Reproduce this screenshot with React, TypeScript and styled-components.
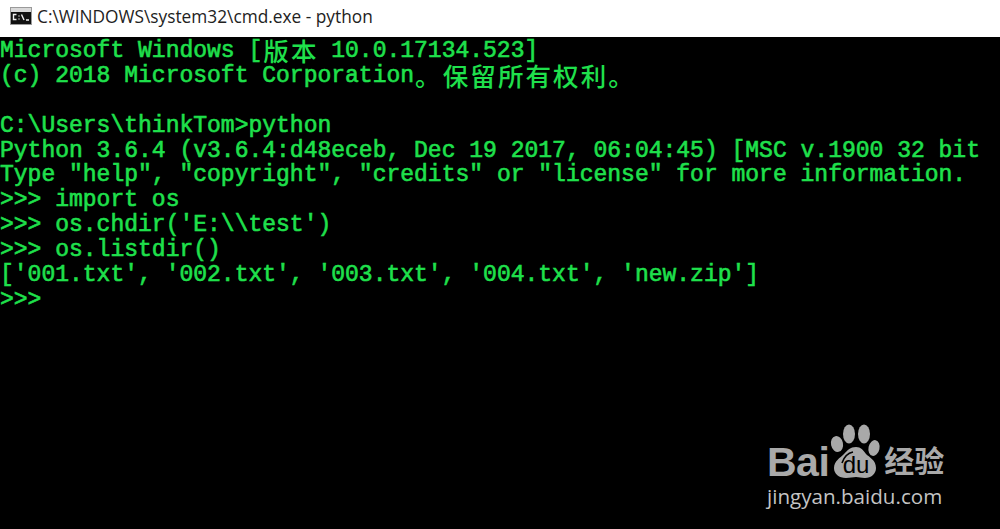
import React from 'react';
import styled, { createGlobalStyle } from 'styled-components';

const GlobalStyle = createGlobalStyle`
  html, body {
    margin: 0;
    padding: 0;
    background: #000;
  }
`;

const Page = styled.div`
  position: relative;
  width: 1000px;
  height: 529px;
  overflow: hidden;
  background: #000;
`;

const TitleBar = styled.div`
  display: flex;
  align-items: center;
  gap: 5px;
  height: 37px;
  padding: 0 0 5px 10px;
  box-sizing: border-box;
  background: #fff;
`;

const TitleText = styled.span`
  font-family: "Open Sans", "Noto Sans", sans-serif;
  font-size: 17.3px;
  color: #222;
  white-space: pre;
`;

const Terminal = styled.div`
  padding-top: 2px;
  font-family: "Liberation Mono", "Noto Sans CJK SC", monospace;
  font-size: 23px;
  font-weight: 400;
  -webkit-text-stroke: 0.6px #1fe04c;
  line-height: 24.9px;
  color: #1fe04c;
`;

const Line = styled.div`
  height: 24.9px;
  white-space: pre;
`;

const Wide = styled.span`
  display: inline-block;
  vertical-align: top;
  width: 27.6px;
  text-align: center;
  font-family: "Noto Sans CJK SC", sans-serif;
  font-size: 25.5px;
  font-weight: 500;
  -webkit-text-stroke: 0;
  line-height: 21px;
`;

const Watermark = styled.div`
  position: absolute;
  left: 767px;
  top: 421px;
  width: 180px;
  display: flex;
  flex-direction: column;
  color: #a9a9a9;
`;

const LogoRow = styled.div`
  display: flex;
  align-items: flex-end;
  height: 57px;
`;

const LogoWord = styled.span`
  font-family: "Liberation Sans", sans-serif;
  font-size: 41px;
  font-weight: 700;
  line-height: 31px;
  letter-spacing: -0.5px;
`;

const PawMark = styled.svg`
  flex: none;
  margin-left: 4px;
  overflow: visible;
`;

const LogoCjk = styled.span`
  margin-left: 5px;
  font-family: "Noto Sans CJK SC", sans-serif;
  font-size: 30px;
  font-weight: 700;
  line-height: 38px;
`;

const SiteUrl = styled.div`
  margin-top: 5px;
  font-family: "Open Sans", sans-serif;
  font-size: 20.6px;
  line-height: 26px;
  white-space: nowrap;
  color: #c4c4c4;
`;

const CmdIcon = () => (
  <svg width="22" height="18" viewBox="0 0 22 18">
    <rect x="0" y="0" width="22" height="18" fill="#9a9a9a" />
    <rect x="1" y="1" width="20" height="4" fill="#d8d8d8" />
    <rect x="1" y="5" width="20" height="12" fill="#111" />
    <path d="M6.5 7.5h-3v5h3M9 8.5v1M9 11.5v1M11.5 7.5l2.5 5.5M16 13h3" stroke="#efefef" strokeWidth="1.4" fill="none" />
  </svg>
);

const Paw = () => (
  <PawMark width="46" height="57" viewBox="0 0 46 57">
    <ellipse cx="4" cy="23" rx="6" ry="8" transform="rotate(-12 4 23)" fill="#a9a9a9" />
    <ellipse cx="16" cy="13" rx="6" ry="9.5" fill="#a9a9a9" />
    <ellipse cx="31" cy="13" rx="6" ry="9.5" fill="#a9a9a9" />
    <ellipse cx="41" cy="27" rx="5.5" ry="8" transform="rotate(12 41 27)" fill="#a9a9a9" />
    <path
      d="M23 26c5 0 7 3 10 7 3 3 10 6 10 14 0 6-5 10-11 10-4 0-6-1-9-1s-6 1-10 1c-7 0-12-4-12-10 0-7 6-10 10-14 4-4 6-7 12-7z"
      fill="#a9a9a9"
    />
    <path d="M9 42c2-6 6-10 11-11" stroke="#000" strokeWidth="1.6" fill="none" />
    <text
      x="23"
      y="52"
      textAnchor="middle"
      fontFamily="Liberation Sans, sans-serif"
      fontWeight="400"
      fontSize="24"
      fill="#000"
    >
      du
    </text>
  </PawMark>
);

const lines: React.ReactNode[] = [
  <>Microsoft Windows [<Wide>版</Wide><Wide>本</Wide> 10.0.17134.523]</>,
  <>(c) 2018 Microsoft Corporation<Wide>。</Wide><Wide>保</Wide><Wide>留</Wide><Wide>所</Wide><Wide>有</Wide><Wide>权</Wide><Wide>利</Wide><Wide>。</Wide></>,
  '',
  'C:\\Users\\thinkTom>python',
  'Python 3.6.4 (v3.6.4:d48eceb, Dec 19 2017, 06:04:45) [MSC v.1900 32 bit',
  'Type "help", "copyright", "credits" or "license" for more information.',
  '>>> import os',
  ">>> os.chdir('E:\\\\test')",
  '>>> os.listdir()',
  "['001.txt', '002.txt', '003.txt', '004.txt', 'new.zip']",
  '>>>',
];

const App = () => (
  <Page>
    <GlobalStyle />
    <TitleBar>
      <CmdIcon />
      <TitleText>C:\WINDOWS\system32\cmd.exe - python</TitleText>
    </TitleBar>
    <Terminal>
      {lines.map((line, index) => (
        <Line key={index}>{line}</Line>
      ))}
    </Terminal>
    <Watermark>
      <LogoRow>
        <LogoWord>Bai</LogoWord>
        <Paw />
        <LogoCjk>经验</LogoCjk>
      </LogoRow>
      <SiteUrl>jingyan.baidu.com</SiteUrl>
    </Watermark>
  </Page>
);

export default App;
